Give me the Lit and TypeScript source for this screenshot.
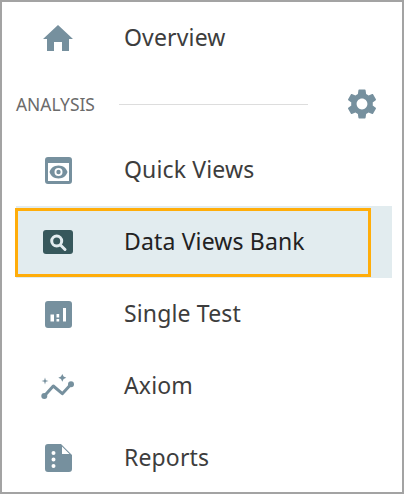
import { LitElement, html, css, svg } from "lit";
import { customElement } from "lit/decorators.js";

const icons = {
  home: svg`<path d="M15 0 0 14h4v12h7v-9h8v9h7V14h4z"/>`,
  views: svg`<path fill-rule="evenodd" d="M3 0h21a3 3 0 0 1 3 3v21a3 3 0 0 1-3 3H3a3 3 0 0 1-3-3V3a3 3 0 0 1 3-3zm0 6v18h21V6z"/><path fill-rule="evenodd" d="M13.500 8.500c4.600 0 8 2.800 9 6.500-1 3.700-4.400 6.500-9 6.500s-8-2.800-9-6.500c1-3.700 4.400-6.500 9-6.500zm0 2.500a4 4 0 1 0 0 8 4 4 0 0 0 0-8z"/><circle cx="13.500" cy="15" r="2.200"/>`,
  search: svg`<rect width="30" height="24" rx="3" fill="#37585c"/><circle cx="13.700" cy="11" r="5" fill="none" stroke="#e2ecef" stroke-width="3"/><path d="m17.500 15 4.500 4.500" stroke="#e2ecef" stroke-width="3" stroke-linecap="round"/>`,
  chart: svg`<path fill-rule="evenodd" d="M3 0h21a3 3 0 0 1 3 3v21a3 3 0 0 1-3 3H3a3 3 0 0 1-3-3V3a3 3 0 0 1 3-3zm2.500 13.500v7H9v-7zm6 -.500v3.500h2.700V13zm0 5v2.500h2.700V18zM18 7v13.500h3V7z"/>`,
  axiom: svg`<path d="M3.300 22 12.300 12l9 7.700 8.700-9.400" fill="none" stroke="currentColor" stroke-width="3" stroke-linecap="round" stroke-linejoin="round"/><circle cx="3.300" cy="22" r="3"/><circle cx="30" cy="10.300" r="3"/><path d="m21.300 0 1.300 2.400 2.700 1.300-2.700 1.300-1.300 2.700L20 5 17.300 3.700 20 2.400z"/><path d="m4 3.500.8 2.700 2.700.8-2.700.8L4 10.500l-.8-2.700L.5 7l2.700-.8z"/>`,
  report: svg`<path fill-rule="evenodd" d="M3 0h13l11 11v14a3 3 0 0 1-3 3H3a3 3 0 0 1-3-3V3a3 3 0 0 1 3-3zm14 2.500V10h7.500zM8.500 7a2 2 0 1 0 0 4 2 2 0 0 0 0-4zm0 6.500a2 2 0 1 0 0 4 2 2 0 0 0 0-4zm0 6.500a2 2 0 1 0 0 4 2 2 0 0 0 0-4z"/>`,
  gear: svg`<path fill-rule="evenodd" d="M19.140 12.940c.04-.3.06-.61.06-.94 0-.32-.02-.64-.07-.94l2.030-1.580c.18-.14.23-.41.12-.61l-1.920-3.320c-.12-.22-.37-.29-.59-.22l-2.390.96c-.5-.38-1.030-.7-1.620-.94l-.36-2.540c-.04-.24-.24-.41-.48-.41h-3.840c-.24 0-.43.17-.47.41l-.36 2.540c-.59.24-1.130.57-1.620.94l-2.390-.96c-.22-.08-.47 0-.59.22L2.740 8.870c-.12.21-.08.47.12.61l2.030 1.580c-.05.3-.09.63-.09.94s.02.64.07.94l-2.030 1.580c-.18.14-.23.41-.12.61l1.920 3.320c.12.22.37.29.59.22l2.390-.96c.5.38 1.030.7 1.620.94l.36 2.540c.05.24.24.41.48.41h3.840c.24 0 .44-.17.47-.41l.36-2.540c.59-.24 1.130-.56 1.620-.94l2.390.96c.22.08.47 0 .59-.22l1.920-3.320c.12-.22.07-.47-.12-.61l-2.010-1.580zM12 15.600c-1.980 0-3.600-1.620-3.600-3.600s1.620-3.600 3.600-3.600 3.600 1.620 3.600 3.600-1.620 3.600-3.600 3.600z"/>`,
};

const icon = (name: keyof typeof icons, w: number, h: number) =>
  html`<svg width=${w} height=${h} viewBox="0 0 ${w} ${h}">${icons[name]}</svg>`;

@customElement("app-root")
export class AppRoot extends LitElement {
  static styles = css`
    :host {
      display: block;
      width: 404px;
      height: 494px;
      box-sizing: border-box;
      border: 2px solid #a3a3a3;
      overflow: hidden;
      background: #fff;
      font-family: "Noto Sans", sans-serif;
    }
    .row {
      display: flex;
      align-items: center;
      height: 72px;
      width: 376px;
      margin-left: 14px;
      position: relative;
      color: #3d3d3d;
      font-size: 23px;
      letter-spacing: 0.15px;
      line-height: 30px;
    }
    .slot {
      width: 109px;
      flex: none;
      display: flex;
      justify-content: center;
      padding-right: 25px;
      box-sizing: border-box;
      color: #76909e;
      fill: #76909e;
    }
    .label {
      position: relative;
      top: -1px;
      margin-left: -1px;
    }
    .selected {
      background: #e2ecef;
      color: #222;
    }
    .selected::after {
      content: "";
      position: absolute;
      left: -1px;
      top: 2px;
      width: 356px;
      height: 69px;
      box-sizing: border-box;
      border: 3px solid #ffad0a;
    }
    .section {
      display: flex;
      align-items: center;
      height: 60px;
      margin-left: 14px;
      color: #6b6b6b;
      font-size: 17.400px;
    }
    .rule {
      width: 189px;
      height: 1px;
      background: #dddddd;
      margin-left: 24px;
    }
    .gear {
      display: flex;
      fill: #76909e;
      margin-left: 39px;
    }
  `;

  render() {
    return html`
      <div class="row">
        <span class="slot">${icon("home", 30, 26)}</span><span class="label">Overview</span>
      </div>
      <div class="section">
        <span>ANALYSIS</span><span class="rule"></span>
        <span class="gear"><svg width="30" height="30" viewBox="2 2 20 20">${icons.gear}</svg></span>
      </div>
      <div class="row">
        <span class="slot">${icon("views", 27, 27)}</span><span class="label">Quick Views</span>
      </div>
      <div class="row selected">
        <span class="slot">${icon("search", 30, 24)}</span><span class="label">Data Views Bank</span>
      </div>
      <div class="row">
        <span class="slot">${icon("chart", 27, 27)}</span><span class="label">Single Test</span>
      </div>
      <div class="row">
        <span class="slot">${icon("axiom", 34, 25)}</span><span class="label">Axiom</span>
      </div>
      <div class="row">
        <span class="slot">${icon("report", 27, 28)}</span><span class="label">Reports</span>
      </div>
    `;
  }
}
